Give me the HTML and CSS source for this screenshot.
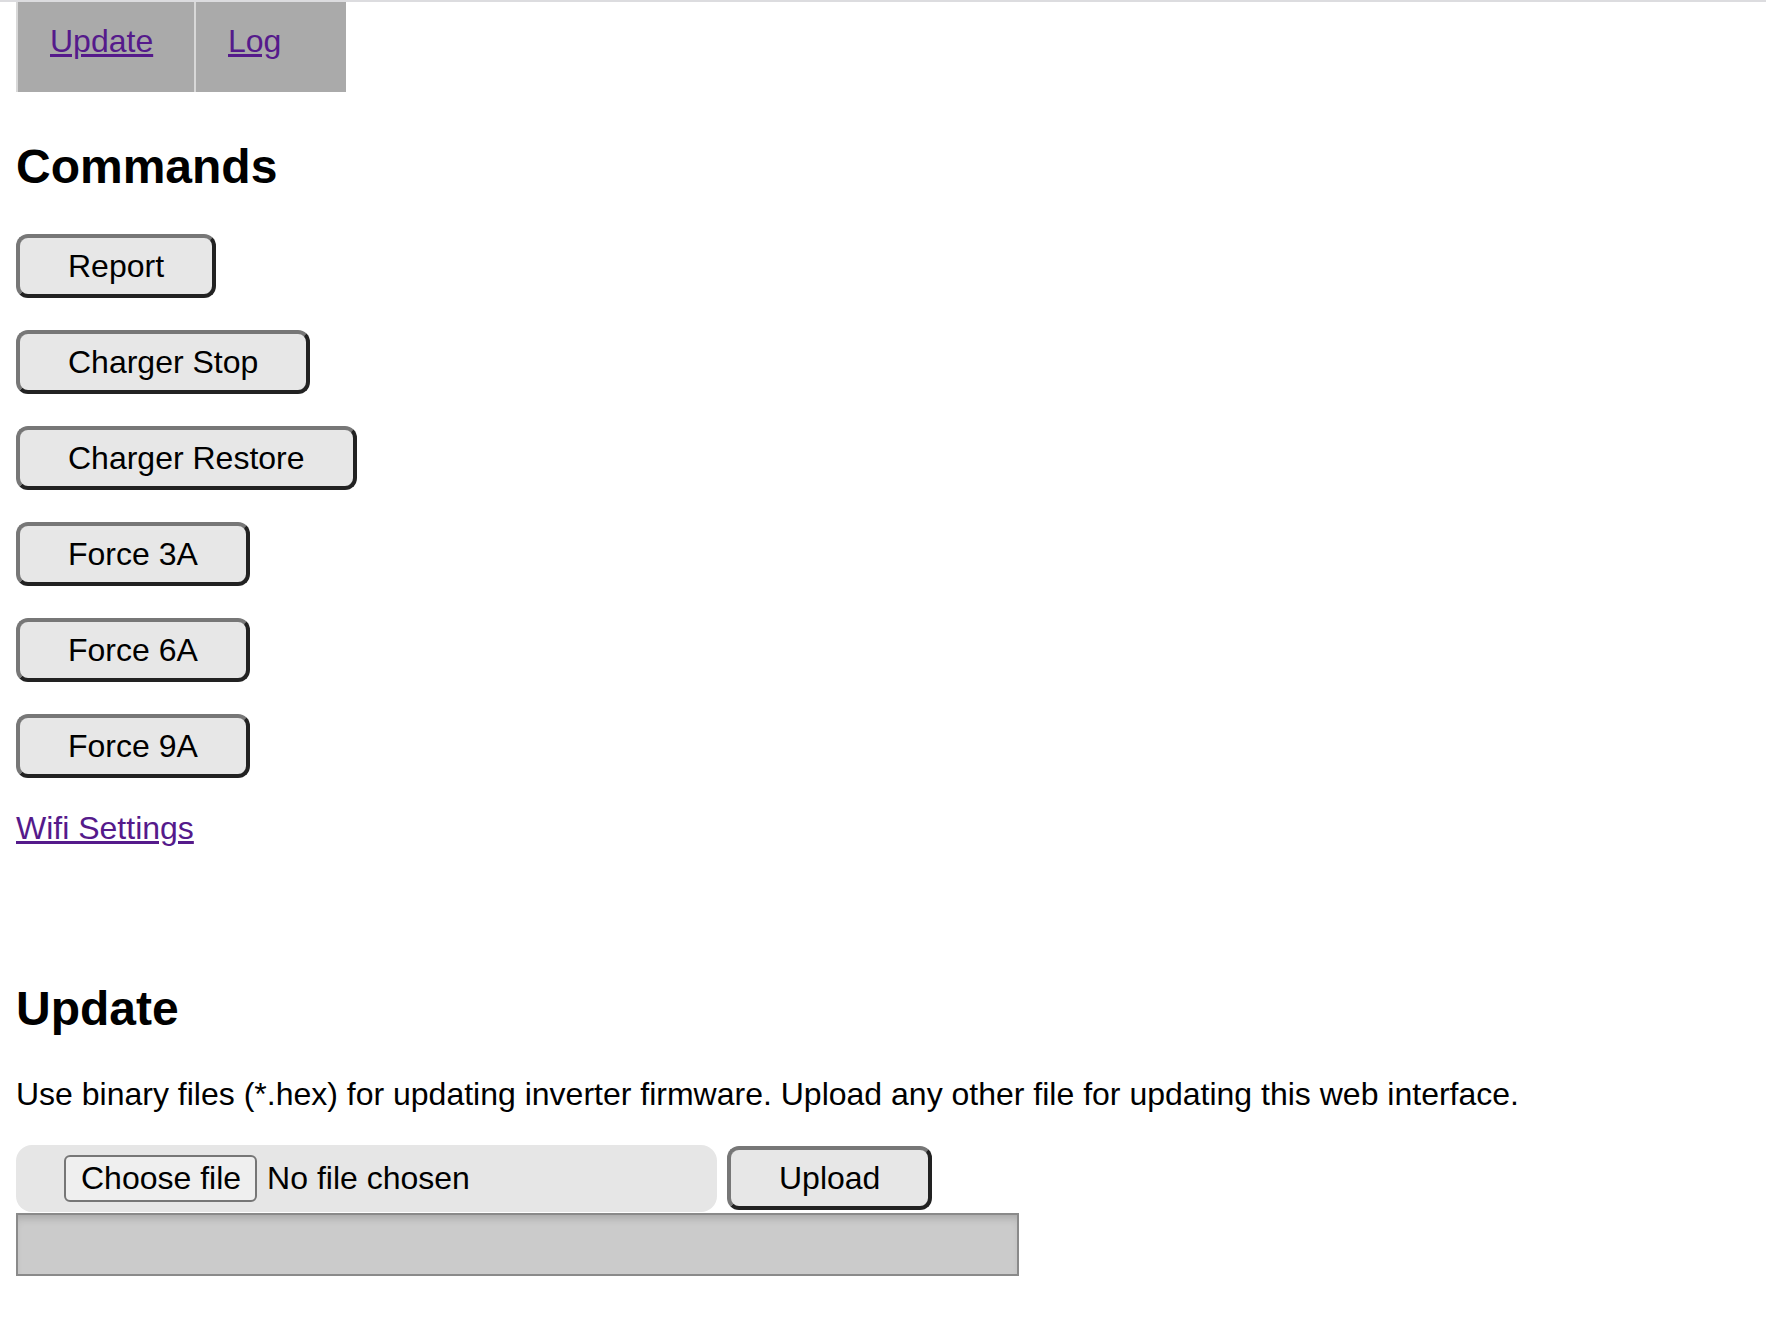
FILE: index.html
```html
<!DOCTYPE html>
<html lang="en">
<head>
    <meta charset="UTF-8">
    <meta name="viewport" content="width=device-width, initial-scale=1.0">
    <title>Inverter - Commands</title>
    <link rel="stylesheet" href="styles.css">
</head>
<body>
    <div class="top-line"></div>
    <div class="page">
        <nav class="tabs">
            <div class="tab tab-update"><a href="#update">Update</a></div>
            <div class="tab tab-log"><a href="#log">Log</a></div>
        </nav>

        <section class="commands">
            <h2>Commands</h2>
            <p><button class="cmd-button">Report</button></p>
            <p><button class="cmd-button">Charger Stop</button></p>
            <p><button class="cmd-button">Charger Restore</button></p>
            <p><button class="cmd-button">Force 3A</button></p>
            <p><button class="cmd-button">Force 6A</button></p>
            <p><button class="cmd-button">Force 9A</button></p>
            <p><a href="#wifi">Wifi Settings</a></p>
        </section>

        <section class="update" id="update">
            <h2>Update</h2>
            <p>Use binary files (*.hex) for updating inverter firmware. Upload any other file for updating this web interface.</p>
            <form class="upload-form">
                <label class="file-picker">
                    <input type="file" class="file-input" name="file">
                    <span class="file-button">Choose file</span><span class="file-name">No file chosen</span>
                </label><button type="button" class="cmd-button upload-button">Upload</button>
            </form>
            <div class="progress"></div>
        </section>
    </div>
</body>
</html>
```

FILE: styles.css
```css
* {
    box-sizing: border-box;
}

body {
    margin: 0;
    font-family: "Liberation Sans", Arial, sans-serif;
    font-size: 32px;
    color: #000;
    background-color: #fff;
}

a {
    color: #551a8b;
}

.top-line {
    height: 2px;
    background-color: #dcdcdf;
}

.page {
    padding: 0 16px;
}

.tabs {
    display: flex;
}

.tab {
    height: 90px;
    padding: 21px 0 0 32px;
    background-color: #aaa;
    border-left: 2px solid #d8d8d8;
    line-height: 37px;
}

.tab-update {
    width: 178px;
}

.tab-log {
    width: 152px;
}

h2 {
    font-size: 48px;
    font-weight: bold;
    margin: 40px 0;
}

.commands h2 {
    margin-top: 47px;
}

p {
    margin: 32px 0;
}

.cmd-button {
    font-family: "Liberation Sans", Arial, sans-serif;
    font-size: 32px;
    line-height: 36px;
    color: #000;
    background-color: #e7e7e7;
    padding: 10px 48px;
    border: 4px solid;
    border-color: #777 #222 #222 #777;
    border-radius: 12px;
    cursor: pointer;
}

.update {
    margin-top: 134px;
}

.upload-form {
    margin: 0;
}

.file-picker {
    display: inline-block;
    width: 701px;
    padding: 10px 0 10px 48px;
    background-color: #e6e6e6;
    border-radius: 16px;
    line-height: 37px;
    vertical-align: baseline;
}

.file-input {
    display: none;
}

.file-button {
    display: inline-block;
    padding: 3px 14px 3px 15px;
    margin-right: 10px;
    background-color: #efefef;
    border: 2px solid #767676;
    border-radius: 6px;
    cursor: pointer;
}

.upload-button {
    margin-left: 10px;
}

.progress {
    width: 1003px;
    height: 63px;
    margin-top: 1px;
    background-color: #cbcbcb;
    border: 2px solid #8a8a8a;
    box-shadow: inset 0 7px 8px -4px rgba(0, 0, 0, 0.18);
}
```
